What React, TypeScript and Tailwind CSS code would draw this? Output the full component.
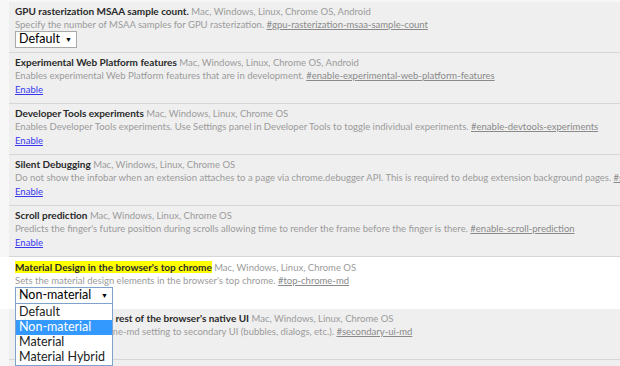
import React from 'react';

interface Experiment {
  name: string;
  platforms: string;
  desc: string;
  anchor: string;
  control: 'enable' | 'select';
  value?: string;
  highlighted?: boolean;
}

const experiments: Experiment[] = [
  {
    name: 'GPU rasterization MSAA sample count.',
    platforms: 'Mac, Windows, Linux, Chrome OS, Android',
    desc: 'Specify the number of MSAA samples for GPU rasterization.',
    anchor: '#gpu-rasterization-msaa-sample-count',
    control: 'select',
    value: 'Default',
  },
  {
    name: 'Experimental Web Platform features',
    platforms: 'Mac, Windows, Linux, Chrome OS, Android',
    desc: 'Enables experimental Web Platform features that are in development.',
    anchor: '#enable-experimental-web-platform-features',
    control: 'enable',
  },
  {
    name: 'Developer Tools experiments',
    platforms: 'Mac, Windows, Linux, Chrome OS',
    desc: 'Enables Developer Tools experiments. Use Settings panel in Developer Tools to toggle individual experiments.',
    anchor: '#enable-devtools-experiments',
    control: 'enable',
  },
  {
    name: 'Silent Debugging',
    platforms: 'Mac, Windows, Linux, Chrome OS',
    desc: 'Do not show the infobar when an extension attaches to a page via chrome.debugger API. This is required to debug extension background pages.',
    anchor: '#silent-debugging',
    control: 'enable',
  },
  {
    name: 'Scroll prediction',
    platforms: 'Mac, Windows, Linux, Chrome OS',
    desc: "Predicts the finger's future position during scrolls allowing time to render the frame before the finger is there.",
    anchor: '#enable-scroll-prediction',
    control: 'enable',
  },
  {
    name: "Material Design in the browser's top chrome",
    platforms: 'Mac, Windows, Linux, Chrome OS',
    desc: "Sets the material design elements in the browser's top chrome.",
    anchor: '#top-chrome-md',
    control: 'select',
    value: 'Non-material',
    highlighted: true,
  },
  {
    name: "Material Design in the rest of the browser's native UI",
    platforms: 'Mac, Windows, Linux, Chrome OS',
    desc: 'Extends the --top-chrome-md setting to secondary UI (bubbles, dialogs, etc.).',
    anchor: '#secondary-ui-md',
    control: 'enable',
  },
  {
    name: 'Hide inactive tab close buttons',
    platforms: 'Windows, Linux, Chrome OS',
    desc: 'Hides the close buttons of inactive tabs.',
    anchor: '#tab-close-buttons',
    control: 'enable',
  },
];

const options = ['Default', 'Non-material', 'Material', 'Material Hybrid'];

function SelectBox({ value, open }: { value: string; open?: boolean }) {
  return (
    <div className="relative">
      <div
        className={`flex items-center h-[17px] pl-[3px] pr-[4px] bg-white border text-[12.5px] leading-none text-black ${
          open ? 'w-[98px] border-[#7da2ce] justify-between' : 'w-fit border-[#a9a9a9] gap-[5px]'
        }`}
      >
        <span>{value}</span>
        <span className="text-[7px]">▼</span>
      </div>
      {open && (
        <div className="absolute left-0 top-[16px] w-[98px] pt-[1px] bg-white border border-[#7da2ce] z-10">
          {options.map((o) => (
            <div
              key={o}
              className={`h-[15px] pl-[3px] flex items-center text-[12.5px] leading-none ${
                o === value ? 'bg-[#3399ff] text-white' : 'text-[#222]'
              }`}
            >
              {o}
            </div>
          ))}
        </div>
      )}
    </div>
  );
}

function ExperimentRow({ exp }: { exp: Experiment }) {
  const isSelect = exp.control === 'select';
  return (
    <div className={`flex ${exp.highlighted ? 'bg-white' : 'bg-[#f7f7f7]'}`}>
      <div className="w-[9px] shrink-0" />
      <div
        className={`flex-1 min-w-0 pl-[6px] whitespace-nowrap ${
          exp.highlighted
            ? 'bg-white pt-[4px] pb-[5px]'
            : `bg-[#efefef] border-b border-[#d6d6d6] pt-[3px] ${isSelect ? 'pb-[4px]' : 'pb-[7px]'}`
        }`}
      >
        <div className="h-[13px] leading-[13px]">
          <span
            className={`font-bold text-[10px] text-[#2a2a2a] ${exp.highlighted ? 'bg-[#ffff00]' : ''}`}
          >
            {exp.name}
          </span>{' '}
          <span className="text-[#9b9b9b]">{exp.platforms}</span>
        </div>
        <div className="h-[13px] leading-[13px] text-[#9b9b9b]">
          {exp.desc}{' '}
          <span className="underline text-[#8a8a8a]">{exp.anchor}</span>
        </div>
        {isSelect ? (
          <SelectBox value={exp.value ?? ''} open={exp.highlighted} />
        ) : (
          <div className="h-[14px] leading-[14px] pt-[1px]">
            <span className="underline text-[#3737f0]">Enable</span>
          </div>
        )}
      </div>
    </div>
  );
}

export default function App() {
  return (
    <div
      className="w-[620px] h-[366px] overflow-hidden bg-[#f7f7f7] pt-[2px] text-[9.5px]"
      style={{ fontFamily: 'Lato, "Open Sans", sans-serif' }}
    >
      {experiments.map((exp) => (
        <ExperimentRow key={exp.anchor} exp={exp} />
      ))}
    </div>
  );
}
